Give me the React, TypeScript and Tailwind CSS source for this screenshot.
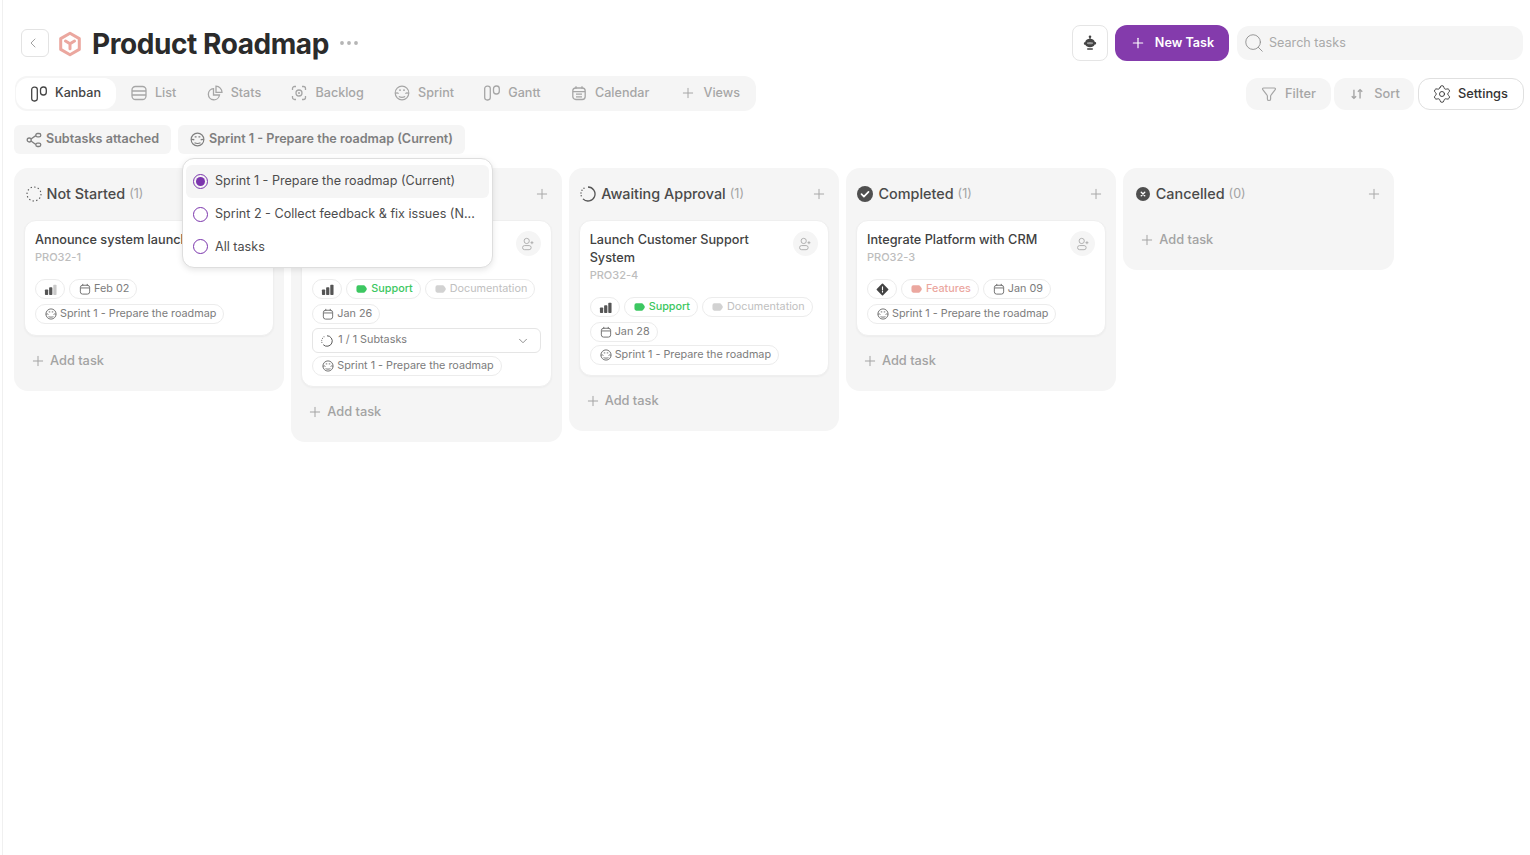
import { ChevronDown, ChevronLeft, Ellipsis, Plus, Search, Settings } from "lucide-react";
import type { ReactNode } from "react";

type IconProps = { className?: string };

// small hand drawn icons, lucide has no close match for these
function KanbanIcon({ className = "" }: IconProps) {
  return (
    <svg viewBox="0 0 16 16" className={className} fill="none" stroke="currentColor" strokeWidth="1.3">
      <rect x="0.7" y="1.2" width="5.600" height="13.800" rx="2.400" />
      <rect x="9.500" y="1" width="5.800" height="8" rx="2.700" />
    </svg>
  );
}

function ListIcon({ className = "" }: IconProps) {
  return (
    <svg viewBox="0 0 16 16" className={className} fill="none" stroke="currentColor" strokeWidth="1.3">
      <rect x="1" y="1.500" width="14" height="13" rx="3.500" />
      <path d="M1 6h14M1 10h14" />
    </svg>
  );
}

function StatsIcon({ className = "" }: IconProps) {
  return (
    <svg viewBox="0 0 16 16" className={className} fill="none" stroke="currentColor" strokeWidth="1.3">
      <path d="M6.500 3.600a5.600 5.600 0 1 0 6 6.400H6.500z" />
      <path d="M9 1.200v6.200h6A6.200 6.200 0 0 0 9 1.200z" />
    </svg>
  );
}

function BacklogIcon({ className = "" }: IconProps) {
  return (
    <svg viewBox="0 0 16 16" className={className} fill="none" stroke="currentColor" strokeWidth="1.3">
      <path d="M5 1.500H3.500a2 2 0 0 0-2 2V5M11 1.500h1.500a2 2 0 0 1 2 2V5M5 14.500H3.500a2 2 0 0 1-2-2V11M11 14.500h1.500a2 2 0 0 0 2-2V11" />
      <circle cx="8" cy="8" r="3" />
      <circle cx="8" cy="8" r="1" fill="currentColor" stroke="none" />
    </svg>
  );
}

function SprintIcon({ className = "" }: IconProps) {
  return (
    <svg viewBox="0 0 16 16" className={className} fill="none" stroke="currentColor" strokeWidth="1.200">
      <circle cx="8" cy="8" r="6.800" />
      <path d="M1.200 8.600c1.300-.9 2.400-.9 3.400 0M11.400 8.600c1-.9 2.100-.9 3.400 0M5 5.200h2M9 5.200h2M4.800 11.500c1.800.9 4.600.9 6.400 0" />
    </svg>
  );
}

function CalendarIcon({ className = "" }: IconProps) {
  return (
    <svg viewBox="0 0 16 16" className={className} fill="none" stroke="currentColor" strokeWidth="1.200">
      <rect x="1.800" y="3" width="12.400" height="11.800" rx="3" />
      <path d="M5 1.200v2.600M11 1.200v2.600M2 6.600h12" />
    </svg>
  );
}

function BigCalendarIcon({ className = "" }: IconProps) {
  return (
    <svg viewBox="0 0 16 16" className={className} fill="none" stroke="currentColor" strokeWidth="1.300">
      <rect x="1.800" y="3" width="12.400" height="11.500" rx="3" />
      <path d="M5 1.200v2.600M11 1.200v2.600M2 6.600h12M5 9.200h6M5 11.800h6" />
    </svg>
  );
}

function SubtasksIcon({ className = "" }: IconProps) {
  return (
    <svg viewBox="0 0 16 16" className={className} fill="none" stroke="currentColor" strokeWidth="1.300">
      <rect x="9.800" y="1.500" width="5" height="3.400" rx="1.700" />
      <rect x="9.800" y="11.100" width="5" height="3.400" rx="1.700" />
      <circle cx="3.200" cy="8" r="2" />
      <path d="M5 7l4.800-3.400M5 9l4.800 3.600" />
    </svg>
  );
}

function FilterIcon({ className = "" }: IconProps) {
  return (
    <svg viewBox="0 0 16 16" className={className} fill="none" stroke="currentColor" strokeWidth="1.200">
      <path d="M2.600 2h10.800c.9 0 1.300 1 .8 1.700L10 9.200c-.3.300-.4.700-.4 1.100v2.600c0 .9-.7 1.600-1.600 1.600s-1.600-.7-1.600-1.600v-2.600c0-.4-.1-.8-.4-1.100L1.800 3.700C1.300 3 1.700 2 2.600 2z" />
    </svg>
  );
}

function SortIcon({ className = "" }: IconProps) {
  return (
    <svg viewBox="0 0 16 16" className={className} fill="none" stroke="currentColor" strokeWidth="1.600">
      <path d="M4.500 3v10M2 10.500L4.500 13 7 10.500M11.500 13V3M9 5.500L11.500 3 14 5.500" />
    </svg>
  );
}

function RobotIcon({ className = "" }: IconProps) {
  return (
    <svg viewBox="0 0 16 16" className={className} fill="#444444">
      <circle cx="8" cy="1.800" r="1.300" />
      <rect x="7.400" y="2.500" width="1.200" height="2" />
      <path d="M8 3.800c2.900 0 4.500 1.500 4.800 3.200h.5c.5 0 .8.400.8.800v1c0 .4-.3.800-.8.800h-.6C12 11.400 10.300 12.300 8 12.300s-4-.9-4.700-2.500h-.6c-.5 0-.8-.4-.8-.8v-1c0-.4.3-.8.800-.8h.5C3.500 5.300 5.100 3.800 8 3.800z" />
      <rect x="5" y="13.200" width="6" height="1.500" rx=".7" />
      <path d="M5 7.600c1.800-.7 4.200-.7 6 0v1.200c-1.800.7-4.200.7-6 0z" fill="#9a9a9a" />
    </svg>
  );
}

function LogoIcon({ className = "" }: IconProps) {
  return (
    <svg viewBox="0 0 24 26" className={className} fill="none" stroke="#eba79f">
      <path d="M12 2.200l9.300 5.400v10.800L12 23.800l-9.300-5.400V7.600z" strokeWidth="3" strokeLinejoin="round" />
      <path d="M7.500 10l4.500 2.800 4.500-2.800M12 12.800v5" strokeWidth="3" strokeLinecap="round" />
    </svg>
  );
}

function AddUserIcon({ className = "" }: IconProps) {
  return (
    <svg viewBox="0 0 16 16" className={className} fill="none" stroke="currentColor" strokeWidth="1">
      <circle cx="6.500" cy="4.500" r="3" />
      <rect x="1.800" y="9.800" width="9.800" height="4.700" rx="2.350" />
      <path d="M12.500 4.800v3.400M10.800 6.500h3.400" />
    </svg>
  );
}

function PriorityIcon({ level }: { level: number }) {
  const bars = [
    { x: 1, y: 7, h: 6 },
    { x: 5.500, y: 4.500, h: 8.500 },
    { x: 10, y: 2, h: 11 },
  ];
  return (
    <svg viewBox="0 0 14 14" className="w-[13px] h-[13px] -ml-[1px]">
      {bars.map((b, i) => (
        <rect key={b.x} x={b.x} y={b.y} width="3.500" height={b.h} rx="0.800" fill={i < level ? "#555555" : "#c9c9c9"} />
      ))}
    </svg>
  );
}

function UrgentIcon() {
  return (
    <svg viewBox="0 0 14 14" className="w-[13px] h-[13px] -ml-[1px]">
      <path d="M7 1.500l5.500 5.500L7 12.500 1.500 7z" fill="#444444" stroke="#444444" strokeWidth="1.800" strokeLinejoin="round" />
      <path d="M7 4.200v3.200M7 8.900v.9" stroke="#fff" strokeWidth="1.200" strokeLinecap="round" />
    </svg>
  );
}

function TagIcon({ color }: { color: string }) {
  return (
    <svg viewBox="0 0 12 10" className="w-[11px] h-2.5 mr-[1px]">
      <path d="M2.500 1h6c.5 0 .9.200 1.200.5l1.800 2.500c.4.600.4 1.400 0 2L9.700 8.500c-.3.300-.7.500-1.200.5h-6A2 2 0 0 1 .5 7V3a2 2 0 0 1 2-2z" fill={color} />
    </svg>
  );
}

function StatusIcon({ kind }: { kind: string }) {
  if (kind === "done") {
    return (
      <svg viewBox="0 0 16 16" className="w-4 h-4">
        <circle cx="8" cy="8" r="8" fill="#4f4f4f" />
        <path d="M4.500 8.200l2.400 2.400 4.600-4.800" fill="none" stroke="#fff" strokeWidth="1.700" strokeLinecap="round" strokeLinejoin="round" />
      </svg>
    );
  }
  if (kind === "cancel") {
    return (
      <svg viewBox="0 0 16 16" className="w-3.5 h-3.5">
        <circle cx="8" cy="8" r="8" fill="#4f4f4f" />
        <path d="M6 6l4 4M10 6l-4 4" stroke="#fff" strokeWidth="1.600" strokeLinecap="round" />
      </svg>
    );
  }
  if (kind === "todo") {
    return (
      <svg viewBox="0 0 16 16" className="w-4 h-4" fill="none" stroke="#555555" strokeWidth="1.100">
        <circle cx="8" cy="8" r="7" strokeDasharray="1.400 2.260" />
      </svg>
    );
  }
  return <ProgressRing className="w-4 h-4" />;
}

function ProgressRing({ className = "" }: IconProps) {
  return (
    <svg viewBox="0 0 16 16" className={className} fill="none" stroke="#555555" strokeWidth="1.300">
      <path d="M8 1a7 7 0 1 1-5 11.900" />
      <path d="M1.200 9.800v-.1M1 7v-.1M2 4.300v-.1M4 2.300v-.1" strokeLinecap="round" strokeWidth="1.400" />
    </svg>
  );
}

function Chip({ children }: { children: ReactNode }) {
  return (
    <span className="flex items-center gap-[3px] h-5 pl-[9px] pr-[7px] rounded-full border border-[#ececec] bg-white text-[10.800px] text-[#7c7c7c] whitespace-nowrap">
      {children}
    </span>
  );
}

function SprintChip() {
  return (
    <div className="flex">
      <Chip>
        <SprintIcon className="w-3 h-3 text-[#666666]" />
        Sprint 1 - Prepare the roadmap
      </Chip>
    </div>
  );
}

function DateChip({ label }: { label: string }) {
  return (
    <Chip>
      <CalendarIcon className="w-3 h-3 text-[#666666]" />
      {label}
    </Chip>
  );
}

function SupportChips() {
  return (
    <>
      <Chip>
        <PriorityIcon level={3} />
      </Chip>
      <Chip>
        <TagIcon color="#3cc761" />
        <span className="text-[#3cc761] font-medium">Support</span>
      </Chip>
      <Chip>
        <TagIcon color="#d2d2d2" />
        <span className="text-[#c0c0c0]">Documentation</span>
      </Chip>
    </>
  );
}

function AddTask({ empty }: { empty: boolean }) {
  return (
    <div className={`flex items-center gap-[4px] h-[50px] pl-[16px] text-[12.800px] font-medium text-[#a3a3a3] ${empty ? "-mt-[5px]" : ""}`}>
      <Plus className="w-4 h-4" strokeWidth={1.500} />
      Add task
    </div>
  );
}

function AssignButton() {
  return (
    <div className="w-[25px] h-[25px] shrink-0 flex items-center justify-center rounded-full bg-[#f5f5f5] text-[#a8a8a8]">
      <AddUserIcon className="w-3.5 h-3.5" />
    </div>
  );
}

function Card({ title, id, children }: { title: ReactNode; id: string; children: ReactNode }) {
  return (
    <div className="rounded-xl bg-white border border-[#efefef] shadow-[0_1px_2px_rgba(0,0,0,0.04)] px-[10px] pt-[10px] pb-[11px]">
      <div className="flex justify-between items-start gap-3">
        <div className="min-w-0">
          <div className="text-[12.700px] leading-[18px] font-medium text-[#414141]">{title}</div>
          <div className="text-[11px] leading-[17px] font-medium text-[#bdbdbd]">{id}</div>
        </div>
        <AssignButton />
      </div>
      <div className="mt-[13px] flex flex-col gap-[5px]">{children}</div>
    </div>
  );
}

function Column({ status, name, count, children }: { status: string; name?: string; count?: number; children?: ReactNode }) {
  return (
    <div className="w-[270.330px] shrink-0 self-start rounded-[14px] bg-[#f5f5f5]">
      <div className="h-[52px] flex items-center pl-[11px] pr-[12px]">
        <div className="w-[17px] flex justify-center shrink-0">
          <StatusIcon kind={status} />
        </div>
        {name && <span className="ml-[4.500px] text-[14.400px] font-medium text-[#4a4a4a]">{name}</span>}
        {name && <span className="ml-[4px] text-[12.500px] text-[#a3a3a3]">({count})</span>}
        <Plus className="w-4 h-4 ml-auto text-[#a8a8a8]" strokeWidth={1.500} />
      </div>
      {children && <div className="px-[10px]">{children}</div>}
      <AddTask empty={!children} />
      <div className="h-[5px]" />
    </div>
  );
}

const tabs = [
  { label: "List", icon: <ListIcon className="w-4 h-4" /> },
  { label: "Stats", icon: <StatsIcon className="w-4 h-4" /> },
  { label: "Backlog", icon: <BacklogIcon className="w-4 h-4" /> },
  { label: "Sprint", icon: <SprintIcon className="w-4 h-4" /> },
  { label: "Gantt", icon: <KanbanIcon className="w-4 h-4" /> },
  { label: "Calendar", icon: <BigCalendarIcon className="w-4 h-4" /> },
  { label: "Views", icon: <Plus className="w-4 h-4" strokeWidth={1.500} /> },
];

function SprintMenu() {
  const options = [
    { label: "Sprint 1 - Prepare the roadmap (Current)", selected: true },
    { label: "Sprint 2 - Collect feedback & fix issues (N...", selected: false },
    { label: "All tasks", selected: false },
  ];
  return (
    <div className="absolute left-[182px] top-[158px] z-10 w-[311px] h-[110px] rounded-xl bg-white border border-[#dedede] shadow-[0_2px_6px_rgba(0,0,0,0.1)] p-[3px] pt-[6px]">
      {options.map((o) => (
        <div key={o.label} className={`h-[32.600px] flex items-center gap-[7px] pl-[7px] pt-[1px] rounded-md text-[12.600px] text-[#4d4d4d] whitespace-nowrap ${o.selected ? "bg-[#f5f5f5]" : ""}`}>
          <span className="w-[15px] h-[15px] rounded-full border border-[#7b35ad] flex items-center justify-center">
            {o.selected && <span className="w-[9px] h-[9px] rounded-full bg-[#7b35ad]" />}
          </span>
          {o.label}
        </div>
      ))}
    </div>
  );
}

export default function App() {
  return (
    <div className="relative h-[855px] overflow-hidden bg-white font-['Inter',sans-serif]">
      <div className="ml-[2px] h-full border-l border-[#f0f0f0] pl-[11px] pr-[6px] pt-[25px]">
        {/* title row */}
        <div className="flex items-center h-9 pr-[1px]">
          <button className="ml-[7px] w-[28px] h-[28px] rounded-md border border-[#e3e3e3] flex items-center justify-center pr-[4px] text-[#8a8a8a]">
            <ChevronLeft className="w-4 h-4" strokeWidth={1.200} />
          </button>
          <LogoIcon className="ml-[9px] w-6 h-[26px] mt-[2px]" />
          <h1 className="ml-[10px] pt-[2px] text-[28px] font-bold tracking-[-0.430px] text-[#2b2b2b] leading-9">Product Roadmap</h1>
          <Ellipsis className="ml-[8px] w-6 h-6 text-[#b5b5b5]" strokeWidth={1.800} />
          <button className="ml-auto w-9 h-9 rounded-lg border border-[#e5e5e5] flex items-center justify-center">
            <RobotIcon className="w-4 h-4" />
          </button>
          <button className="ml-[7px] w-[114px] h-9 rounded-xl bg-[#843bac] flex items-center justify-center gap-[9px] text-[12.600px] font-semibold text-white">
            <Plus className="w-4 h-4" strokeWidth={1.800} />
            New Task
          </button>
          <div className="ml-2 w-[286px] h-[34px] rounded-xl bg-[#f5f5f5] flex items-center gap-[4px] pl-[6px] text-[12.600px] text-[#a9a9a9]">
            <Search className="w-[22px] h-[22px] text-[#8f8f8f]" strokeWidth={1} />
            Search tasks
          </div>
        </div>

        {/* tabs row */}
        <div className="flex items-center mt-[15px]">
          <div className="flex items-center h-[35px] ml-[1px] rounded-xl bg-[#f5f5f5] pl-[1px] pr-[16px]">
            <div className="w-[100px] h-[31px] rounded-xl bg-white flex items-center justify-center gap-[8px] text-[12.600px] font-medium text-[#454545]">
              <KanbanIcon className="w-4 h-4" />
              Kanban
            </div>
            <div className="flex items-center gap-[30.250px] ml-[15px]">
              {tabs.map((t) => (
                <div key={t.label} className="flex items-center gap-[8px] text-[12.600px] font-medium text-[#a6a6a6]">
                  {t.icon}
                  {t.label}
                </div>
              ))}
            </div>
          </div>
          <div className="ml-auto flex items-center gap-[3px]">
            <div className="w-[85px] h-8 rounded-xl bg-[#f5f5f5] flex items-center justify-center gap-2 text-[12.800px] font-medium text-[#a6a6a6]">
              <FilterIcon className="w-4 h-4" />
              Filter
            </div>
            <div className="w-[80px] h-8 rounded-xl bg-[#f5f5f5] flex items-center justify-center gap-[10px] pl-[2px] text-[12.800px] font-medium text-[#a6a6a6]">
              <SortIcon className="w-[14px] h-[14px]" />
              Sort
            </div>
            <div className="ml-[1px] w-[106px] h-8 rounded-xl border border-[#e0e0e0] bg-white flex items-center justify-center gap-[6px] pr-[2px] text-[12.800px] font-medium text-[#333333]">
              <Settings className="w-5 h-5" strokeWidth={1.100} />
              Settings
            </div>
          </div>
        </div>

        {/* filter chips */}
        <div className="flex items-center gap-[7px] mt-[14px] text-[12.600px] font-semibold text-[#7f7f7f]">
          <div className="w-[157px] h-[29px] rounded-md bg-[#f5f5f5] flex items-center justify-center gap-[4px]">
            <SubtasksIcon className="w-4 h-4" />
            Subtasks attached
          </div>
          <div className="w-[287px] h-[29px] rounded-md bg-[#f5f5f5] flex items-center justify-center gap-[4px]">
            <SprintIcon className="w-[15px] h-[15px]" />
            Sprint 1 - Prepare the roadmap (Current)
          </div>
        </div>

        {/* board */}
        <div className="flex gap-[7px] mt-[14px]">
          <Column status="todo" name="Not Started" count={1}>
            <Card title="Announce system launch" id="PRO32-1">
              <div className="flex gap-[4px]">
                <Chip>
                  <PriorityIcon level={2} />
                </Chip>
                <DateChip label="Feb 02" />
              </div>
              <SprintChip />
            </Card>
          </Column>
          {/* title of this column and card sit behind the open menu */}
          <Column status="progress">
            <Card title={"\u00a0"} id={"\u00a0"}>
              <div className="flex gap-[4px]">
                <SupportChips />
              </div>
              <div className="flex">
                <DateChip label="Jan 26" />
              </div>
              <div className="h-[25px] -mt-[1px] -mb-[2px] rounded-md border border-[#e5e5e5] flex items-center gap-[5px] pl-[8px] pr-[10px] text-[10.800px] text-[#7c7c7c]">
                <ProgressRing className="w-3 h-3" />
                1 / 1 Subtasks
                <ChevronDown className="w-3.5 h-3.5 ml-auto text-[#777777]" strokeWidth={1.400} />
              </div>
              <div className="-mb-[1px]">
                <SprintChip />
              </div>
            </Card>
          </Column>
          <Column status="progress" name="Awaiting Approval" count={1}>
            <Card title={<span>Launch Customer Support<br />System</span>} id="PRO32-4">
              <div className="flex gap-[4px]">
                <SupportChips />
              </div>
              <div className="flex">
                <DateChip label="Jan 28" />
              </div>
              <div className="-mt-[2px] -mb-[1px]">
                <SprintChip />
              </div>
            </Card>
          </Column>
          <Column status="done" name="Completed" count={1}>
            <Card title="Integrate Platform with CRM" id="PRO32-3">
              <div className="flex gap-[4px]">
                <Chip>
                  <UrgentIcon />
                </Chip>
                <Chip>
                  <TagIcon color="#eba79f" />
                  <span className="text-[#eba79f] font-medium">Features</span>
                </Chip>
                <DateChip label="Jan 09" />
              </div>
              <SprintChip />
            </Card>
          </Column>
          <Column status="cancel" name="Cancelled" count={0} />
        </div>
      </div>
      <SprintMenu />
    </div>
  );
}
